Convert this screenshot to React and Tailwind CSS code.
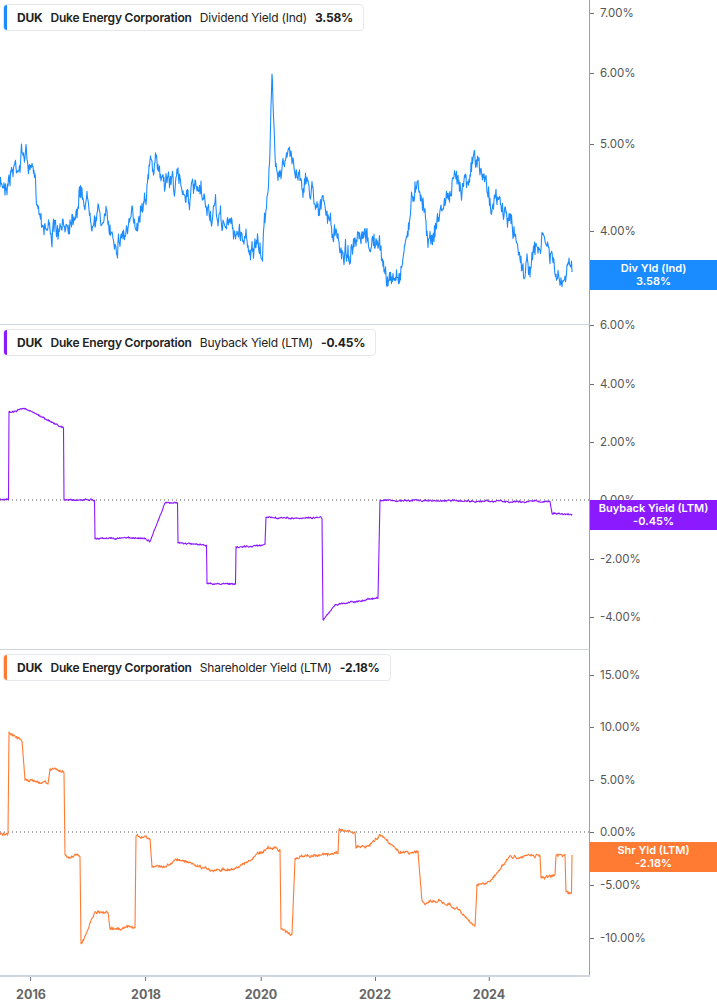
import React from "react";

function rng(seed) {
  let s = seed;
  return () => {
    s = (s * 16807) % 2147483647;
    return (s - 1) / 2147483646;
  };
}

function series(keys, off, noise, walk, seed, step = 0.5) {
  const r = rng(seed);
  const pts = [];
  let w = 0;
  for (let i = 0; i < keys.length - 1; i++) {
    const [x0, y0] = keys[i];
    const [x1, y1] = keys[i + 1];
    if (x1 === x0) {
      pts.push([x1, y1 - off]);
      continue;
    }
    for (let x = x0; x < x1; x += step) {
      w = w * 0.85 + (r() - 0.5) * walk;
      const y = y0 + ((y1 - y0) * (x - x0)) / (x1 - x0) + w + (r() - 0.5) * noise;
      pts.push([x, y - off]);
    }
  }
  const last = keys[keys.length - 1];
  pts.push([last[0], last[1] - off]);
  return pts.map((p) => p[0].toFixed(1) + "," + p[1].toFixed(1)).join(" ");
}

const p1 = [[0,190],[10,170],[25,150],[40,210],[60,240],[80,190],[100,215],[115,235],[135,225],[150,165],[180,185],[195,195],[210,215],[245,235],[262,260],[270,150],[272,80],[275,160],[290,160],[305,180],[320,200],[340,250],[360,250],[375,240],[390,285],[400,270],[418,170],[430,240],[445,200],[475,160],[490,195],[510,220],[525,270],[545,240],[560,290],[572,272]];
const p2 = [[0,500],[8,500],[9,500],[9,412],[25,408],[40,416],[64,428],[64,500],[95,500],[95,538],[145,538],[150,541],[165,503],[178,503],[178,543],[207,545],[207,583],[236,585],[236,548],[265,545],[266,518],[322,518],[323,620],[335,605],[378,598],[380,500],[550,502],[552,514],[572,514]];
const p3 = [[0,835],[8,835],[9,732],[22,740],[25,780],[48,782],[50,768],[64,772],[65,855],[80,857],[81,945],[95,912],[108,912],[110,928],[135,928],[136,836],[150,838],[152,868],[180,860],[210,870],[240,868],[265,850],[268,848],[280,850],[281,928],[292,935],[295,858],[338,853],[339,830],[355,832],[356,847],[370,846],[380,835],[400,852],[418,852],[422,903],[440,900],[460,910],[475,925],[477,885],[490,882],[510,856],[540,855],[541,877],[555,876],[556,855],[565,855],[566,893],[572,893],[572,855]];

const font = { fontFamily: "Inter, 'Liberation Sans', sans-serif" };

function Legend({ color, metric, value }) {
  return (
    <div className="absolute left-[3px] top-[4px] flex h-[27px] items-center gap-[8px] rounded border border-gray-200 bg-white pr-[10px] text-[12px] tracking-[-0.2px] text-[#222]">
      <div className="mr-[2px] h-full w-[3px] rounded-l" style={{ background: color }} />
      <span className="font-bold">DUK</span>
      <span className="font-semibold">Duke Energy Corporation</span>
      <span>{metric}</span>
      <span className="font-bold">{value}</span>
    </div>
  );
}

function Panel({ color, metric, value, pts, ticks, zero, tag, tagTop, bottom }) {
  return (
    <div className="flex h-[325px]">
      <div className={`relative w-[590px] border-r border-gray-400 ${bottom ? "" : "border-b border-b-gray-300"}`}>
        <svg width="590" height="325" className="absolute left-0 top-0">
          {zero != null && (
            <line x1="0" x2="590" y1={zero} y2={zero} stroke="#555" strokeDasharray="1 3" strokeWidth="1" />
          )}
          <polyline points={pts} fill="none" stroke={color} strokeWidth="1.1" strokeLinejoin="round" />
        </svg>
        <Legend color={color} metric={metric} value={value} />
      </div>
      <div className="relative flex-1">
        {ticks.map(([label, y]) => (
          <div key={label} className="absolute left-0 flex items-center gap-[6px] text-[11.5px] text-[#555]" style={{ top: y - 8 }}>
            <div className="h-px w-[4px] bg-gray-500" />
            <span>{label}</span>
          </div>
        ))}
        <div
          className="absolute left-0 right-0 flex h-[30px] flex-col items-center justify-center text-[11px] font-semibold leading-[13px] text-white"
          style={{ top: tagTop, background: color }}
        >
          <span>{tag}</span>
          <span>{value}</span>
        </div>
      </div>
    </div>
  );
}

export default function App() {
  return (
    <div className="w-[717px] h-[1005px] bg-white" style={font}>
      <Panel color="#1a8cff" metric="Dividend Yield (Ind)" value="3.58%" tag="Div Yld (Ind)" tagTop={260}
        pts={series(p1, 0, 10, 14, 7)} ticks={[["7.00%", 13], ["6.00%", 73], ["5.00%", 144], ["4.00%", 231]]} />
      <Panel color="#8c1aff" metric="Buyback Yield (LTM)" value="-0.45%" tag="Buyback Yield (LTM)" tagTop={175} zero={175}
        pts={series(p2, 325, 1.2, 0.8, 11)} ticks={[["6.00%", 0], ["4.00%", 59], ["2.00%", 117], ["0.00%", 175], ["-2.00%", 234], ["-4.00%", 292]]} />
      <Panel color="#ff7a33" metric="Shareholder Yield (LTM)" value="-2.18%" tag="Shr Yld (LTM)" tagTop={192} zero={182} bottom
        pts={series(p3, 650, 2, 1.6, 23)} ticks={[["15.00%", 25], ["10.00%", 77], ["5.00%", 130], ["0.00%", 182], ["-5.00%", 235], ["-10.00%", 288]]} />
      <div className="flex">
        <div className="relative h-[32px] w-[590px] border-t-2 border-gray-300 text-[12.5px] font-bold text-[#666]">
          {[["2016", 31], ["2018", 146], ["2020", 261], ["2022", 375], ["2024", 489]].map(([y, x]) => (
            <div key={y} className="absolute top-0 flex -translate-x-1/2 flex-col items-center" style={{ left: x }}>
              <div className="h-[4px] w-px bg-gray-500" />
              <span className="mt-[5px]">{y}</span>
            </div>
          ))}
        </div>
      </div>
    </div>
  );
}
